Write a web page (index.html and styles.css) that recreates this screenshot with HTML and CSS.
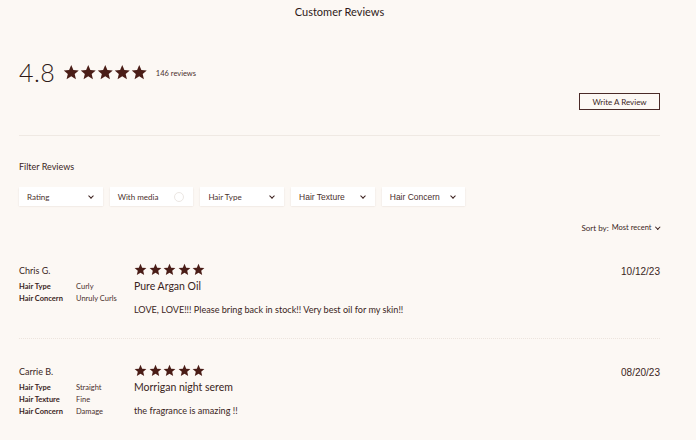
FILE: index.html
```html
<!DOCTYPE html>
<html>
<head>
<meta charset="utf-8">
<link rel="stylesheet" href="styles.css">
</head>
<body>
<div class="page">
  <h1 class="title">Customer Reviews</h1>
  <div class="summary">
    <span class="avg">4.8</span>
    <span class="stars big">
      <svg viewBox="0 0 24 24"><path d="M12 1.5l3.1 7.2 7.8.6-5.9 5.1 1.8 7.6L12 17.9 5.2 22l1.8-7.6L1.1 9.3l7.8-.6z"/></svg>
      <svg viewBox="0 0 24 24"><path d="M12 1.5l3.1 7.2 7.8.6-5.9 5.1 1.8 7.6L12 17.9 5.2 22l1.8-7.6L1.1 9.3l7.8-.6z"/></svg>
      <svg viewBox="0 0 24 24"><path d="M12 1.5l3.1 7.2 7.8.6-5.9 5.1 1.8 7.6L12 17.9 5.2 22l1.8-7.6L1.1 9.3l7.8-.6z"/></svg>
      <svg viewBox="0 0 24 24"><path d="M12 1.5l3.1 7.2 7.8.6-5.9 5.1 1.8 7.6L12 17.9 5.2 22l1.8-7.6L1.1 9.3l7.8-.6z"/></svg>
      <svg viewBox="0 0 24 24"><path d="M12 1.5l3.1 7.2 7.8.6-5.9 5.1 1.8 7.6L12 17.9 5.2 22l1.8-7.6L1.1 9.3l7.8-.6z"/></svg>
    </span>
    <span class="count">146 reviews</span>
  </div>
  <div class="write-row"><button class="write">Write A Review</button></div>
  <hr class="rule">
  <div class="filter-label">Filter Reviews</div>
  <div class="filters">
    <div class="chip"><span>Rating</span><span class="chev"></span></div>
    <div class="chip"><span>With media</span><span class="radio"></span></div>
    <div class="chip"><span>Hair Type</span><span class="chev"></span></div>
    <div class="chip arial"><span>Hair Texture</span><span class="chev"></span></div>
    <div class="chip arial"><span>Hair Concern</span><span class="chev"></span></div>
  </div>
  <div class="sort">Sort by: <span class="sort-val">Most recent</span><span class="chev small"></span></div>

  <div class="review">
    <div class="meta">
      <div class="name">Chris G.</div>
      <div class="attr"><span class="k">Hair Type</span><span class="v">Curly</span></div>
      <div class="attr"><span class="k">Hair Concern</span><span class="v">Unruly Curls</span></div>
    </div>
    <div class="content">
      <span class="stars small">
        <svg viewBox="0 0 24 24"><path d="M12 1.5l3.1 7.2 7.8.6-5.9 5.1 1.8 7.6L12 17.9 5.2 22l1.8-7.6L1.1 9.3l7.8-.6z"/></svg>
        <svg viewBox="0 0 24 24"><path d="M12 1.5l3.1 7.2 7.8.6-5.9 5.1 1.8 7.6L12 17.9 5.2 22l1.8-7.6L1.1 9.3l7.8-.6z"/></svg>
        <svg viewBox="0 0 24 24"><path d="M12 1.5l3.1 7.2 7.8.6-5.9 5.1 1.8 7.6L12 17.9 5.2 22l1.8-7.6L1.1 9.3l7.8-.6z"/></svg>
        <svg viewBox="0 0 24 24"><path d="M12 1.5l3.1 7.2 7.8.6-5.9 5.1 1.8 7.6L12 17.9 5.2 22l1.8-7.6L1.1 9.3l7.8-.6z"/></svg>
        <svg viewBox="0 0 24 24"><path d="M12 1.5l3.1 7.2 7.8.6-5.9 5.1 1.8 7.6L12 17.9 5.2 22l1.8-7.6L1.1 9.3l7.8-.6z"/></svg>
      </span>
      <div class="rtitle">Pure Argan Oil</div>
      <p class="body">LOVE, LOVE!!! Please bring back in stock!! Very best oil for my skin!!</p>
    </div>
    <div class="date">10/12/23</div>
  </div>
  <hr class="rule dotted">
  <div class="review">
    <div class="meta">
      <div class="name">Carrie B.</div>
      <div class="attr"><span class="k">Hair Type</span><span class="v">Straight</span></div>
      <div class="attr"><span class="k">Hair Texture</span><span class="v">Fine</span></div>
      <div class="attr"><span class="k">Hair Concern</span><span class="v">Damage</span></div>
    </div>
    <div class="content">
      <span class="stars small">
        <svg viewBox="0 0 24 24"><path d="M12 1.5l3.1 7.2 7.8.6-5.9 5.1 1.8 7.6L12 17.9 5.2 22l1.8-7.6L1.1 9.3l7.8-.6z"/></svg>
        <svg viewBox="0 0 24 24"><path d="M12 1.5l3.1 7.2 7.8.6-5.9 5.1 1.8 7.6L12 17.9 5.2 22l1.8-7.6L1.1 9.3l7.8-.6z"/></svg>
        <svg viewBox="0 0 24 24"><path d="M12 1.5l3.1 7.2 7.8.6-5.9 5.1 1.8 7.6L12 17.9 5.2 22l1.8-7.6L1.1 9.3l7.8-.6z"/></svg>
        <svg viewBox="0 0 24 24"><path d="M12 1.5l3.1 7.2 7.8.6-5.9 5.1 1.8 7.6L12 17.9 5.2 22l1.8-7.6L1.1 9.3l7.8-.6z"/></svg>
        <svg viewBox="0 0 24 24"><path d="M12 1.5l3.1 7.2 7.8.6-5.9 5.1 1.8 7.6L12 17.9 5.2 22l1.8-7.6L1.1 9.3l7.8-.6z"/></svg>
      </span>
      <div class="rtitle">Morrigan night serem</div>
      <p class="body">the fragrance is amazing !!</p>
    </div>
    <div class="date">08/20/23</div>
  </div>
</div>
</body>
</html>
```
FILE: styles.css
```css
* { box-sizing: border-box; }
html, body { margin: 0; padding: 0; background: #fcf8f4; }
body {
  font-family: Lato, "Noto Sans", sans-serif;
  color: #3b1f1c;
  height: 440px;
  overflow: hidden;
}
.page {
  width: 641px;
  margin-left: 19px;
  padding-top: 5px;
}
.title {
  margin: 0;
  text-align: center;
  font-size: 11px;
  font-weight: 400;
  line-height: 14px;
  color: #2f1a18;
}
.summary {
  display: flex;
  align-items: center;
  margin-top: 38px;
  height: 30px;
}
.avg {
  font-size: 25px;
  font-weight: 300;
  line-height: 30px;
  letter-spacing: 0.5px;
  color: #2f1a18;
}
.stars { display: inline-flex; fill: #4a1d17; }
.stars.big { margin-left: 8px; gap: 0.5px; }
.stars.big svg { width: 16.5px; height: 16.5px; }
.count { font-size: 7.5px; margin-left: 8px; margin-top: 3px; color: #4a2f2c; }
.write-row { display: flex; justify-content: flex-end; margin-top: 6px; }
.write {
  font-family: Lato, sans-serif;
  width: 81px;
  height: 17px;
  border: 1px solid #4a2a27;
  background: transparent;
  color: #3b1f1c;
  font-size: 8px;
  padding: 0;
}
.rule {
  border: 0;
  border-top: 1px solid #efe9e3;
  margin: 25px 0 0 0;
}
.rule.dotted { border-top: 1px dotted #ece4dd; margin-top: 23px; }
.filter-label { font-size: 9px; margin-top: 25px; line-height: 11px; color: #3b1f1c; }
.filters { display: flex; gap: 7.2px; margin-top: 15px; }
.chip {
  width: 83.5px;
  height: 19px;
  background: #fff;
  box-shadow: 0 0.5px 1.5px rgba(120, 90, 80, 0.18);
  display: flex;
  align-items: center;
  justify-content: space-between;
  padding: 0 10px 0 8px;
  font-size: 8px;
  color: #4a2f2c;
}
.chip.arial { font-family: "Liberation Sans", Arial, sans-serif; font-size: 8.5px; }
.chev {
  width: 4px; height: 4px;
  border-right: 1.2px solid #3b1f1c;
  border-bottom: 1.2px solid #3b1f1c;
  transform: rotate(45deg);
  margin-top: -2px;
}
.radio {
  width: 10px; height: 10px;
  border: 1px solid #ece7e3;
  border-radius: 50%;
  margin-right: -1px;
}
.sort {
  display: flex;
  justify-content: flex-end;
  align-items: center;
  font-size: 8px;
  margin-top: 17px;
  line-height: 10px;
}
.sort-val { margin-left: 3px; font-size: 7.5px; }
.chev.small { width: 3.5px; height: 3.5px; margin-left: 4px; margin-right: 1px; border-width: 1px; }
.review {
  display: flex;
  margin-top: 27px;
}
.rule.dotted + .review { margin-top: 22px; }
.meta { width: 115px; }
.name { font-size: 9px; line-height: 11px; margin-top: 5px; margin-bottom: 5px; color: #3b1f1c; }
.attr { display: flex; font-size: 7.5px; line-height: 12px; }
.attr .k { width: 57px; font-weight: 700; color: #3b1f1c; }
.attr .v { color: #4a2f2c; font-weight: 400; }
.content { flex: 1; }
.stars.small { gap: 1.5px; }
.stars.small svg { width: 13px; height: 13px; }
.rtitle { font-size: 10.5px; line-height: 12px; margin-top: 1px; }
.body { font-size: 9.1px; margin: 12px 0 0; line-height: 11px; color: #3b1f1c; }
.date { font-family: "Liberation Sans", Arial, sans-serif; font-size: 10px; margin-top: 6px; color: #3b1f1c; }
```
